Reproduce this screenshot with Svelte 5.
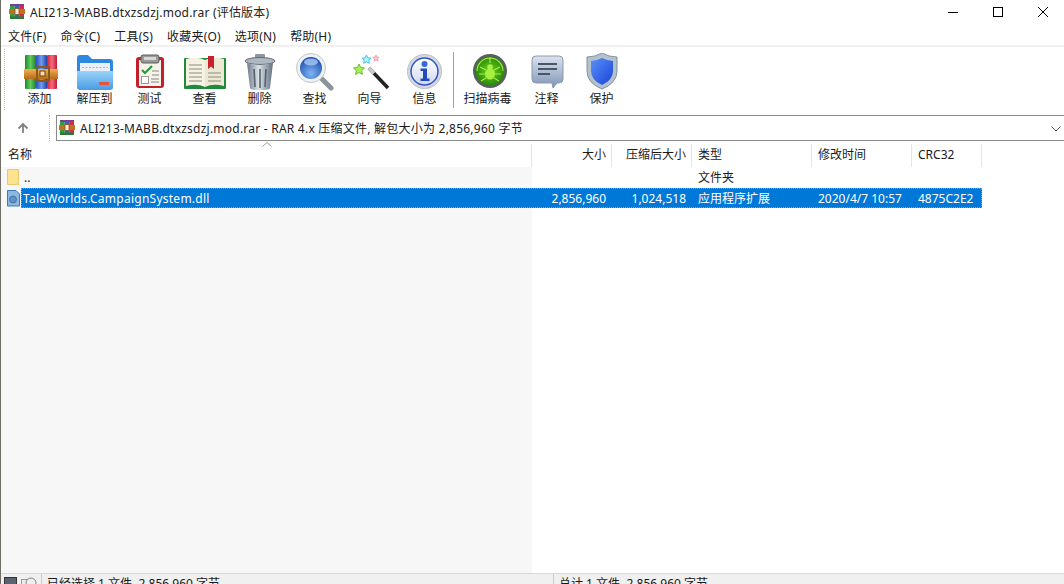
<script>
  const menus = ['文件(F)','命令(C)','工具(S)','收藏夹(O)','选项(N)','帮助(H)'];
  const tools1 = ['添加','解压到','测试','查看','删除','查找','向导','信息'];
  const tools2 = ['扫描病毒','注释','保护'];
  const cols = [
    {t:'名称',w:531,c:'first'},{t:'大小',w:80,c:'r'},{t:'压缩后大小',w:80,c:'r'},
    {t:'类型',w:120,c:''},{t:'修改时间',w:100,c:''},{t:'CRC32',w:70,c:''}
  ];
</script>

{#snippet rar(s)}
  <svg width={s} height={s} viewBox="0 0 16 16" class="rar">
    <rect x="1" y="0" width="4.6" height="15" fill="#2e9e3a"/><rect x="5.6" y="0" width="4.6" height="15" fill="#3a5fc4"/><rect x="10.2" y="0" width="4.8" height="15" fill="#d42a4a"/>
    <rect x="1" y="0" width="14" height="2" fill="#7a3f8f"/><rect x="0" y="5" width="16" height="5" fill="#c0701e"/><rect x="6" y="4.5" width="4" height="6" fill="#f8ecd0" stroke="#7a4a10" stroke-width=".7"/><rect x="1" y="12.500" width="14" height="2.500" fill="#2a7a30"/>
  </svg>
{/snippet}

{#snippet icon(i)}
  <svg width="48" height="38" viewBox="0 0 48 38" class="ic">
    {#if i===0}
      <defs><linearGradient id="ga" x1="0" x2="1" y1="0" y2="0"><stop offset="0" stop-color="#1c8a2c"/><stop offset=".5" stop-color="#62cc5e"/><stop offset="1" stop-color="#1f7f2f"/></linearGradient><linearGradient id="gb" x1="0" x2="1" y1="0" y2="0"><stop offset="0" stop-color="#2b4fc0"/><stop offset=".5" stop-color="#6f9cf0"/><stop offset="1" stop-color="#2440a8"/></linearGradient><linearGradient id="gc" x1="0" x2="1" y1="0" y2="0"><stop offset="0" stop-color="#d01f3f"/><stop offset=".5" stop-color="#f56a7a"/><stop offset="1" stop-color="#c01a3a"/></linearGradient><linearGradient id="gd" x1="0" x2="0" y1="0" y2="1"><stop offset="0" stop-color="#f0b050"/><stop offset="1" stop-color="#b86a18"/></linearGradient></defs>
      <rect x="9" y="2" width="11" height="34" rx="1" fill="url(#ga)"/><rect x="20" y="2" width="11" height="34" rx="1" fill="url(#gb)"/><rect x="31" y="2" width="10" height="34" rx="1" fill="url(#gc)"/>
      <rect x="8" y="16" width="34" height="10" fill="url(#gd)"/><rect x="21" y="14" width="12" height="14" rx="1" fill="none" stroke="#8a5a1a" stroke-width="2"/><rect x="24" y="18" width="5" height="5" fill="#f6e4b0" stroke="#704010"/>
    {:else if i===1}
      <defs><linearGradient id="fa" x1="0" x2="0" y1="0" y2="1"><stop offset="0" stop-color="#9ad3f8"/><stop offset="1" stop-color="#4a9be4"/></linearGradient></defs>
      <path d="M6 5q0-3 3-3h8l4 4h18q3 0 3 3v24q0 3-3 3H9q-3 0-3-3z" fill="#2f88e0"/>
      <rect x="9" y="10" width="30" height="8" fill="#eaf0f6"/>
      <path d="M6 18h36v16q0 3-3 3H9q-3 0-3-3z" fill="url(#fa)"/>
      <path d="M11 14.500h26" stroke="#9fb6cc" stroke-dasharray="2 1.500"/>
      <rect x="28" y="29" width="10" height="3" fill="#e5533c"/>
    {:else if i===2}
      <rect x="10" y="4" width="28" height="31" rx="3" fill="#c4202c"/><rect x="13" y="7" width="22" height="26" fill="#f6f3ea"/>
      <rect x="15" y="2" width="18" height="8" rx="2" fill="#9a9a9a" stroke="#5c5c5c"/><rect x="18" y="4" width="12" height="3" fill="#d8d8d8"/>
      <path d="M16 17l3 3 7-7" fill="none" stroke="#2a9a3a" stroke-width="2.200"/><rect x="15.500" y="23.500" width="7" height="7" fill="#fff" stroke="#999"/><path d="M26 18h7M26 22h7M25 26h8M25 29h8" stroke="#888" stroke-width="1.100"/>
    {:else if i===3}
      <rect x="3" y="5" width="42" height="31" rx="1" fill="#1f8a3c"/><path d="M5 6q11-3 19 1v27q-8-4-19-1z" fill="#f5f2e4"/><path d="M43 6q-11-3-19 1v27q8-4 19-1z" fill="#ece8d4"/>
      <path d="M27 3h6v13l-3-2.500-3 2.500z" fill="#c8202c"/><path d="M8 12h13M8 16h13M8 20h13M8 24h13M8 28h13M27 20h13M27 24h13M27 28h13" stroke="#8a8a7a" stroke-width="1.100"/>
    {:else if i===4}
      <defs><linearGradient id="ta" x1="0" x2="1" y1="0" y2="0"><stop offset="0" stop-color="#6c7a88"/><stop offset=".45" stop-color="#dce3e8"/><stop offset="1" stop-color="#60707e"/></linearGradient></defs>
      <rect x="19" y="1" width="10" height="4" rx="1" fill="#8c98a2"/><ellipse cx="24" cy="8" rx="15" ry="3.500" fill="#aeb8c0" stroke="#667"/><path d="M11 10l3 25q0 2 10 2t10-2l3-25q-13 4-26 0z" fill="url(#ta)"/><path d="M18 16l1 18M24 16v19M30 16l-1 18" stroke="#56636e" stroke-width="1.600"/>
    {:else if i===5}
      <defs><radialGradient id="la" cx=".5" cy=".75" r=".75"><stop offset="0" stop-color="#7fb6f5"/><stop offset="1" stop-color="#1c48a8"/></radialGradient></defs>
      <path d="M30 25l10 10" stroke="#8c949c" stroke-width="5" stroke-linecap="round"/><circle cx="20" cy="15" r="14.500" fill="#eef2f5" stroke="#c0c6cc"/><circle cx="20" cy="15" r="11" fill="url(#la)"/><ellipse cx="20" cy="9" rx="7" ry="3.500" fill="#a8c8f4" opacity=".8"/>
    {:else if i===6}
      <path d="M23 15l19 20" stroke="#222" stroke-width="3.500"/><path d="M23 15l5 5.300" stroke="#ccc" stroke-width="3.500"/>
      <path d="M13 11l1.700 3.500 3.800.5-2.800 2.600.7 3.800-3.400-1.900-3.400 1.900.7-3.800L7.500 15l3.800-.5z" fill="#a8ec5a" stroke="#6cc030"/>
      <path d="M20.500 2l1.400 2.800 3.100.4-2.200 2.100.5 3-2.800-1.500-2.800 1.500.5-3L16 5.200l3.100-.4z" fill="#b0f0fa" stroke="#40c4e4"/>
      <path d="M30 2l1 2 2.200.3-1.600 1.500.4 2.200-2-1-2 1 .4-2.200-1.600-1.500 2.200-.3z" fill="#f8c8d0" stroke="#e88a98" stroke-width=".7"/>
    {:else if i===7}
      <defs><linearGradient id="ia" x1="0" x2="0" y1="0" y2="1"><stop offset="0" stop-color="#fff"/><stop offset="1" stop-color="#cfd8ee"/></linearGradient></defs>
      <circle cx="23.500" cy="18.500" r="17" fill="#d6dadf" stroke="#b8bec6"/><circle cx="23.500" cy="18.500" r="13.500" fill="url(#ia)" stroke="#2f55c8" stroke-width="1.500"/><circle cx="23.500" cy="11" r="3" fill="#3468d8"/><path d="M19.500 15.500h6.500v10h2.500V28h-9v-2.500H22V18h-2.500z" fill="#2448c0"/>
    {:else if i===8}
      <defs><radialGradient id="ba" cx=".5" cy=".5" r=".55"><stop offset="0" stop-color="#70d818"/><stop offset="1" stop-color="#227e10"/></radialGradient></defs>
      <circle cx="26" cy="18" r="17" fill="#5a5e60"/><circle cx="26" cy="18" r="14.500" fill="url(#ba)"/>
      <ellipse cx="26" cy="21" rx="5" ry="5.500" fill="#a8f040"/><circle cx="26" cy="14" r="2.800" fill="#a8f040"/><path d="M16 14l6 3M36 14l-6 3M15 21h6M37 21h-6M17 28l5-3M35 28l-5-3M13 18a13 13 0 0 1 26 0M26 4v6" stroke="#a8f040" stroke-width="1.100" fill="none"/>
    {:else if i===9}
      <defs><linearGradient id="na" x1="0" x2="0" y1="0" y2="1"><stop offset="0" stop-color="#dce4ee"/><stop offset="1" stop-color="#7e94b4"/></linearGradient></defs>
      <path d="M13 3h23q4 0 4 4v19q0 4-4 4h-2l-4 5-1-5H13q-4 0-4-4V7q0-4 4-4z" fill="url(#na)" stroke="#8a9ab0"/><path d="M15 11h19M15 16h19M15 21h12" stroke="#4a5568" stroke-width="1.800"/>
    {:else}
      <defs><linearGradient id="sa" x1="0" x2="1" y1="0" y2="1"><stop offset="0" stop-color="#5a90f8"/><stop offset="1" stop-color="#1a44d8"/></linearGradient></defs>
      <path d="M24 0q7 4 15 4v14q0 12-15 18Q9 30 9 18V4q8 0 15-4z" fill="#b4c2ce" stroke="#8090a0"/><path d="M24 5q6 3 11 3v10q0 9-11 14Q13 27 13 18V8q5 0 11-3z" fill="url(#sa)"/>
    {/if}
  </svg>
{/snippet}

{#snippet tool(t, i)}
  <div class="tool" class:wide={i === 8}>{@render icon(i)}<span>{t}</span></div>
{/snippet}

<div class="win">
  <header class="title">
    {@render rar(16)}
    <span class="ttext">ALI213-MABB.dtxzsdzj.mod.rar (评估版本)</span>
    <div class="caps">
      <svg width="10" height="10" viewBox="0 0 10 10"><path d="M0 5.500h10" stroke="#000"/></svg>
      <svg width="10" height="10" viewBox="0 0 10 10"><rect x=".5" y=".5" width="9" height="9" fill="none" stroke="#000"/></svg>
      <svg width="10" height="10" viewBox="0 0 10 10"><path d="M0 0l10 10M10 0L0 10" stroke="#000"/></svg>
    </div>
  </header>
  <nav class="menu">{#each menus as m}<span>{m}</span>{/each}</nav>
  <section class="toolbar">
    <div class="grip"></div>
    <div class="tools">
      {#each tools1 as t, i}{@render tool(t, i)}{/each}
      <div class="sep"></div>
      {#each tools2 as t, i}{@render tool(t, i + 8)}{/each}
    </div>
  </section>
  <section class="addr">
    <div class="up"><svg width="12" height="12" viewBox="0 0 12 12"><path d="M6 11V2M1.500 6.500L6 2l4.500 4.500" fill="none" stroke="#808080" stroke-width="1.800"/></svg></div>
    <div class="grip short"></div>
    <div class="path">
      {@render rar(16)}
      <span class="ptext">ALI213-MABB.dtxzsdzj.mod.rar - RAR 4.x 压缩文件, 解包大小为 2,856,960 字节</span>
      <svg class="chev" width="10" height="6" viewBox="0 0 10 6"><path d="M.5.500L5 5 9.500.500" fill="none" stroke="#555"/></svg>
    </div>
  </section>
  <section class="list">
    <div class="shade"></div>
    <div class="head">
      {#each cols as c}<div class="hc {c.c}" style="width:{c.w}px">{c.t}</div>{/each}
      <svg class="sort" width="10" height="5" viewBox="0 0 10 5"><path d="M.5 4.500L5 .5l4.500 4" fill="none" stroke="#9a9a9a"/></svg>
    </div>
    <div class="row">
      <div class="cell nm">
        <svg class="fi" width="13" height="17" viewBox="0 0 13 17"><path d="M.5.500h11v15H.5z" fill="#fde28f" stroke="#e7c870"/><path d="M12 11v5H9z" fill="#f3cf6d"/></svg>
        <span>..</span>
      </div>
      <div class="cell" style="width:160px"></div>
      <div class="cell" style="width:120px">文件夹</div>
    </div>
    <div class="row">
      <div class="cell nm">
        <svg class="fi" width="13" height="17" viewBox="0 0 13 17"><path d="M.5.500H9l3.500 3.500v12H.5z" fill="#8fb8e0" stroke="#3f79b4"/><circle cx="6" cy="9.500" r="3.500" fill="#5f92c6" stroke="#2f5f96" stroke-width=".7"/></svg>
      </div>
    </div>
    <div class="sel">
      <div class="cell sname" style="width:511px">TaleWorlds.CampaignSystem.dll</div>
      <div class="cell r" style="width:80px">2,856,960</div>
      <div class="cell r" style="width:80px">1,024,518</div>
      <div class="cell" style="width:120px">应用程序扩展</div>
      <div class="cell" style="width:100px">2020/4/7 10:57</div>
      <div class="cell" style="width:70px">4875C2E2</div>
    </div>
  </section>
  <footer class="status">
    <div class="s1">
      <svg width="14" height="12" viewBox="0 0 14 12"><rect x=".5" y=".5" width="12" height="10" fill="#5a6470" stroke="#333"/></svg>
      <svg width="16" height="12" viewBox="0 0 16 12"><rect x=".5" y="2.500" width="10" height="9" fill="#eee" stroke="#999"/><circle cx="10" cy="6" r="5" fill="#eee" stroke="#888"/></svg>
    </div>
    <div class="s2">已经选择 1 文件, 2,856,960 字节</div>
    <div class="s3">总计 1 文件, 2,856,960 字节</div>
  </footer>
</div>

<style>
  :global(body) { margin: 0; background: #fff; overflow: hidden; }
  .win { width: 1064px; height: 584px; overflow: hidden; display: flex; flex-direction: column; font: 12px "Noto Sans", "Noto Sans CJK SC", sans-serif; color: #1a1a1a; background: #fff; border-left: 1px solid #6e7068; box-sizing: border-box; }
  .title { height: 26px; box-sizing: border-box; flex: none; display: flex; align-items: center; padding: 0 0 2px 8px; gap: 5px; }
  .ttext { letter-spacing: .2px; color: #222; }
  .caps { margin-left: auto; display: flex; gap: 35px; padding-right: 16px; }
  .caps svg { display: block; }
  .menu { height: 21px; box-sizing: border-box; flex: none; display: flex; gap: 14px; padding: 1px 0 0 7px; align-items: center; border-bottom: 2px solid #f0f0f0; letter-spacing: .2px; }
  .toolbar { height: 66px; flex: none; display: flex; }
  .grip { width: 1px; margin: 2px 0 3px 3px; border-left: 1px dotted #bbb; }
  .tools { display: flex; padding: 6px 0 0 6px; }
  .tool { width: 55px; display: flex; flex-direction: column; align-items: center; }
  .tool.wide { width: 63px; }
  .tool span { line-height: 16px; }
  .tool .ic { flex: none; }
  .sep { width: 1px; height: 56px; background: #a0a0a0; margin: -1px 2px 0 1px; }
  .addr { height: 29px; flex: none; display: flex; align-items: flex-start; padding-top: 2px; box-sizing: border-box; }
  .up { width: 43px; height: 26px; display: flex; align-items: center; justify-content: center; }
  .grip.short { height: 26px; margin: 0 5px 0 5px; }
  .path { flex: 1; height: 26px; box-sizing: border-box; border: 1px solid #8a8a8a; border-right: 0; display: flex; align-items: center; gap: 5px; padding-left: 2px; position: relative; }
  .ptext { letter-spacing: .23px; }
  .chev { position: absolute; right: 3px; top: 10px; }
  .list { flex: 1; position: relative; min-height: 0; }
  .shade { position: absolute; left: 0; top: 25px; width: 531px; bottom: 0; background: #f7f7f7; }
  .head { height: 25px; display: flex; position: relative; padding-top: 2px; box-sizing: border-box; }
  .hc { box-sizing: border-box; padding: 2px 6px 0; border-right: 1px solid #e5e5e5; line-height: 18px; }
  .hc.first { padding-left: 7px; }
  .hc.r { padding-right: 5px; }
  .r { text-align: right; }
  .sort { position: absolute; left: 261px; top: 0; }
  .row { height: 21px; display: flex; position: relative; }
  .cell { box-sizing: border-box; padding: 1px 6px 0; line-height: 20px; white-space: nowrap; }
  .cell.nm { width: 531px; display: flex; align-items: center; gap: 4px; padding: 0 6px; }
  .sel { position: absolute; top: 46px; left: 20px; width: 961px; height: 20px; display: flex; background: #0078d7; color: #fff; outline: 1px dotted #e08a20; outline-offset: -1px; }
  .sname { padding-left: 2px; letter-spacing: .25px; }
  .status { height: 11px; flex: none; display: flex; border-top: 1px solid #d8d8d8; box-sizing: border-box; background: #f0f0f0; line-height: 20px; }
  .s1 { width: 41px; box-sizing: border-box; padding-left: 3px; display: flex; gap: 3px; padding-top: 3px; border-right: 1px solid #ccc; }
  .s2 { width: 512px; box-sizing: border-box; padding-left: 5px; border-right: 1px solid #ccc; }
  .s3 { padding-left: 5px; }
</style>
